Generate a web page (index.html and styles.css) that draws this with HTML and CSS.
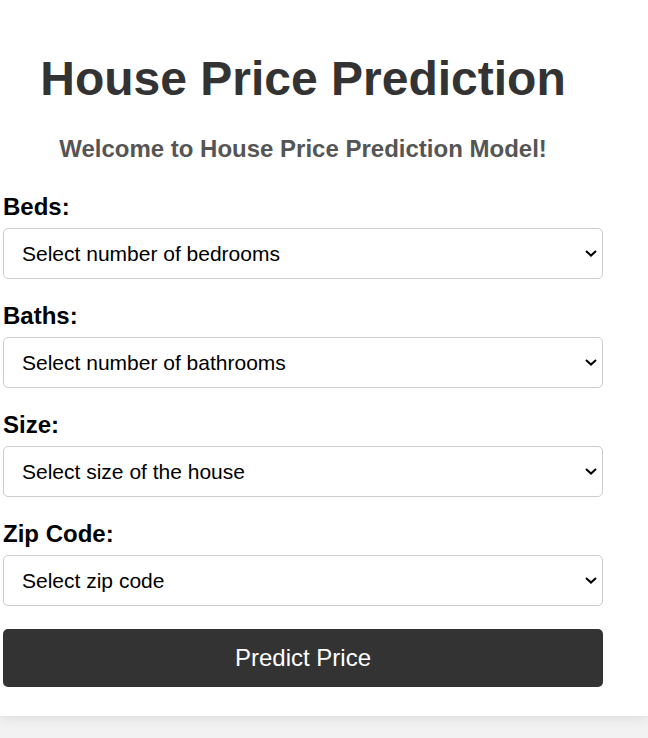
FILE: index.html
```html
<!DOCTYPE html>
<html lang="en">
<head>
<meta charset="utf-8">
<title>House Price Prediction</title>
<link rel="stylesheet" href="styles.css">
</head>
<body>
<div class="container">
  <div class="inner">
    <h1 class="title">House Price Prediction</h1>
    <p class="subtitle">Welcome to House Price Prediction Model!</p>
    <form class="form">
      <div class="group">
        <label class="label" for="beds">Beds:</label>
        <div class="select-wrap">
          <select class="select" id="beds">
            <option>Select number of bedrooms</option>
          </select>
          <svg class="chevron" width="12" height="7" viewBox="0 0 12 7" aria-hidden="true"><path d="M1 1 L6 5.6 L11 1" fill="none" stroke="#000" stroke-width="2"/></svg>
        </div>
      </div>
      <div class="group">
        <label class="label" for="baths">Baths:</label>
        <div class="select-wrap">
          <select class="select" id="baths">
            <option>Select number of bathrooms</option>
          </select>
          <svg class="chevron" width="12" height="7" viewBox="0 0 12 7" aria-hidden="true"><path d="M1 1 L6 5.6 L11 1" fill="none" stroke="#000" stroke-width="2"/></svg>
        </div>
      </div>
      <div class="group">
        <label class="label" for="size">Size:</label>
        <div class="select-wrap">
          <select class="select" id="size">
            <option>Select size of the house</option>
          </select>
          <svg class="chevron" width="12" height="7" viewBox="0 0 12 7" aria-hidden="true"><path d="M1 1 L6 5.6 L11 1" fill="none" stroke="#000" stroke-width="2"/></svg>
        </div>
      </div>
      <div class="group">
        <label class="label" for="zip">Zip Code:</label>
        <div class="select-wrap">
          <select class="select" id="zip">
            <option>Select zip code</option>
          </select>
          <svg class="chevron" width="12" height="7" viewBox="0 0 12 7" aria-hidden="true"><path d="M1 1 L6 5.6 L11 1" fill="none" stroke="#000" stroke-width="2"/></svg>
        </div>
      </div>
      <button class="button" type="button">Predict Price</button>
    </form>
  </div>
</div>
</body>
</html>
```
FILE: styles.css
```css
html, body {
  margin: 0;
  padding: 0;
}
body {
  background: #f2f2f2;
  font-family: "Liberation Sans", Arial, sans-serif;
  height: 738px;
  overflow: hidden;
}
.container {
  background: #fff;
  box-shadow: 0 0 14px rgba(0, 0, 0, 0.12);
  padding: 51px 0 29px 3px;
}
.inner {
  width: 600px;
}
.title {
  margin: 0;
  font-size: 48px;
  line-height: 55px;
  font-weight: bold;
  color: #333;
  text-align: center;
}
.subtitle {
  margin: 29px 0 0;
  font-size: 24px;
  line-height: 28px;
  font-weight: bold;
  color: #555;
  text-align: center;
}
.form {
  margin-top: 30px;
  display: flex;
  flex-direction: column;
}
.group {
  display: flex;
  flex-direction: column;
  margin-bottom: 23px;
}
.label {
  font-size: 24px;
  line-height: 28px;
  font-weight: bold;
  color: #000;
  margin-bottom: 7px;
}
.select-wrap {
  position: relative;
  width: 600px;
  height: 51px;
}
.select {
  -webkit-appearance: none;
  appearance: none;
  width: 600px;
  height: 51px;
  box-sizing: border-box;
  border: 1px solid #ccc;
  border-radius: 5px;
  background: #fff;
  color: #000;
  font-family: "Liberation Sans", Arial, sans-serif;
  font-size: 21px;
  padding: 0 18px;
  margin: 0;
}
.chevron {
  position: absolute;
  right: 6px;
  top: 22px;
  pointer-events: none;
}
.button {
  width: 600px;
  height: 58px;
  border: none;
  border-radius: 5px;
  background: #333;
  color: #fff;
  font-family: "Liberation Sans", Arial, sans-serif;
  font-size: 24px;
  margin: 0;
  padding: 0;
}
```
